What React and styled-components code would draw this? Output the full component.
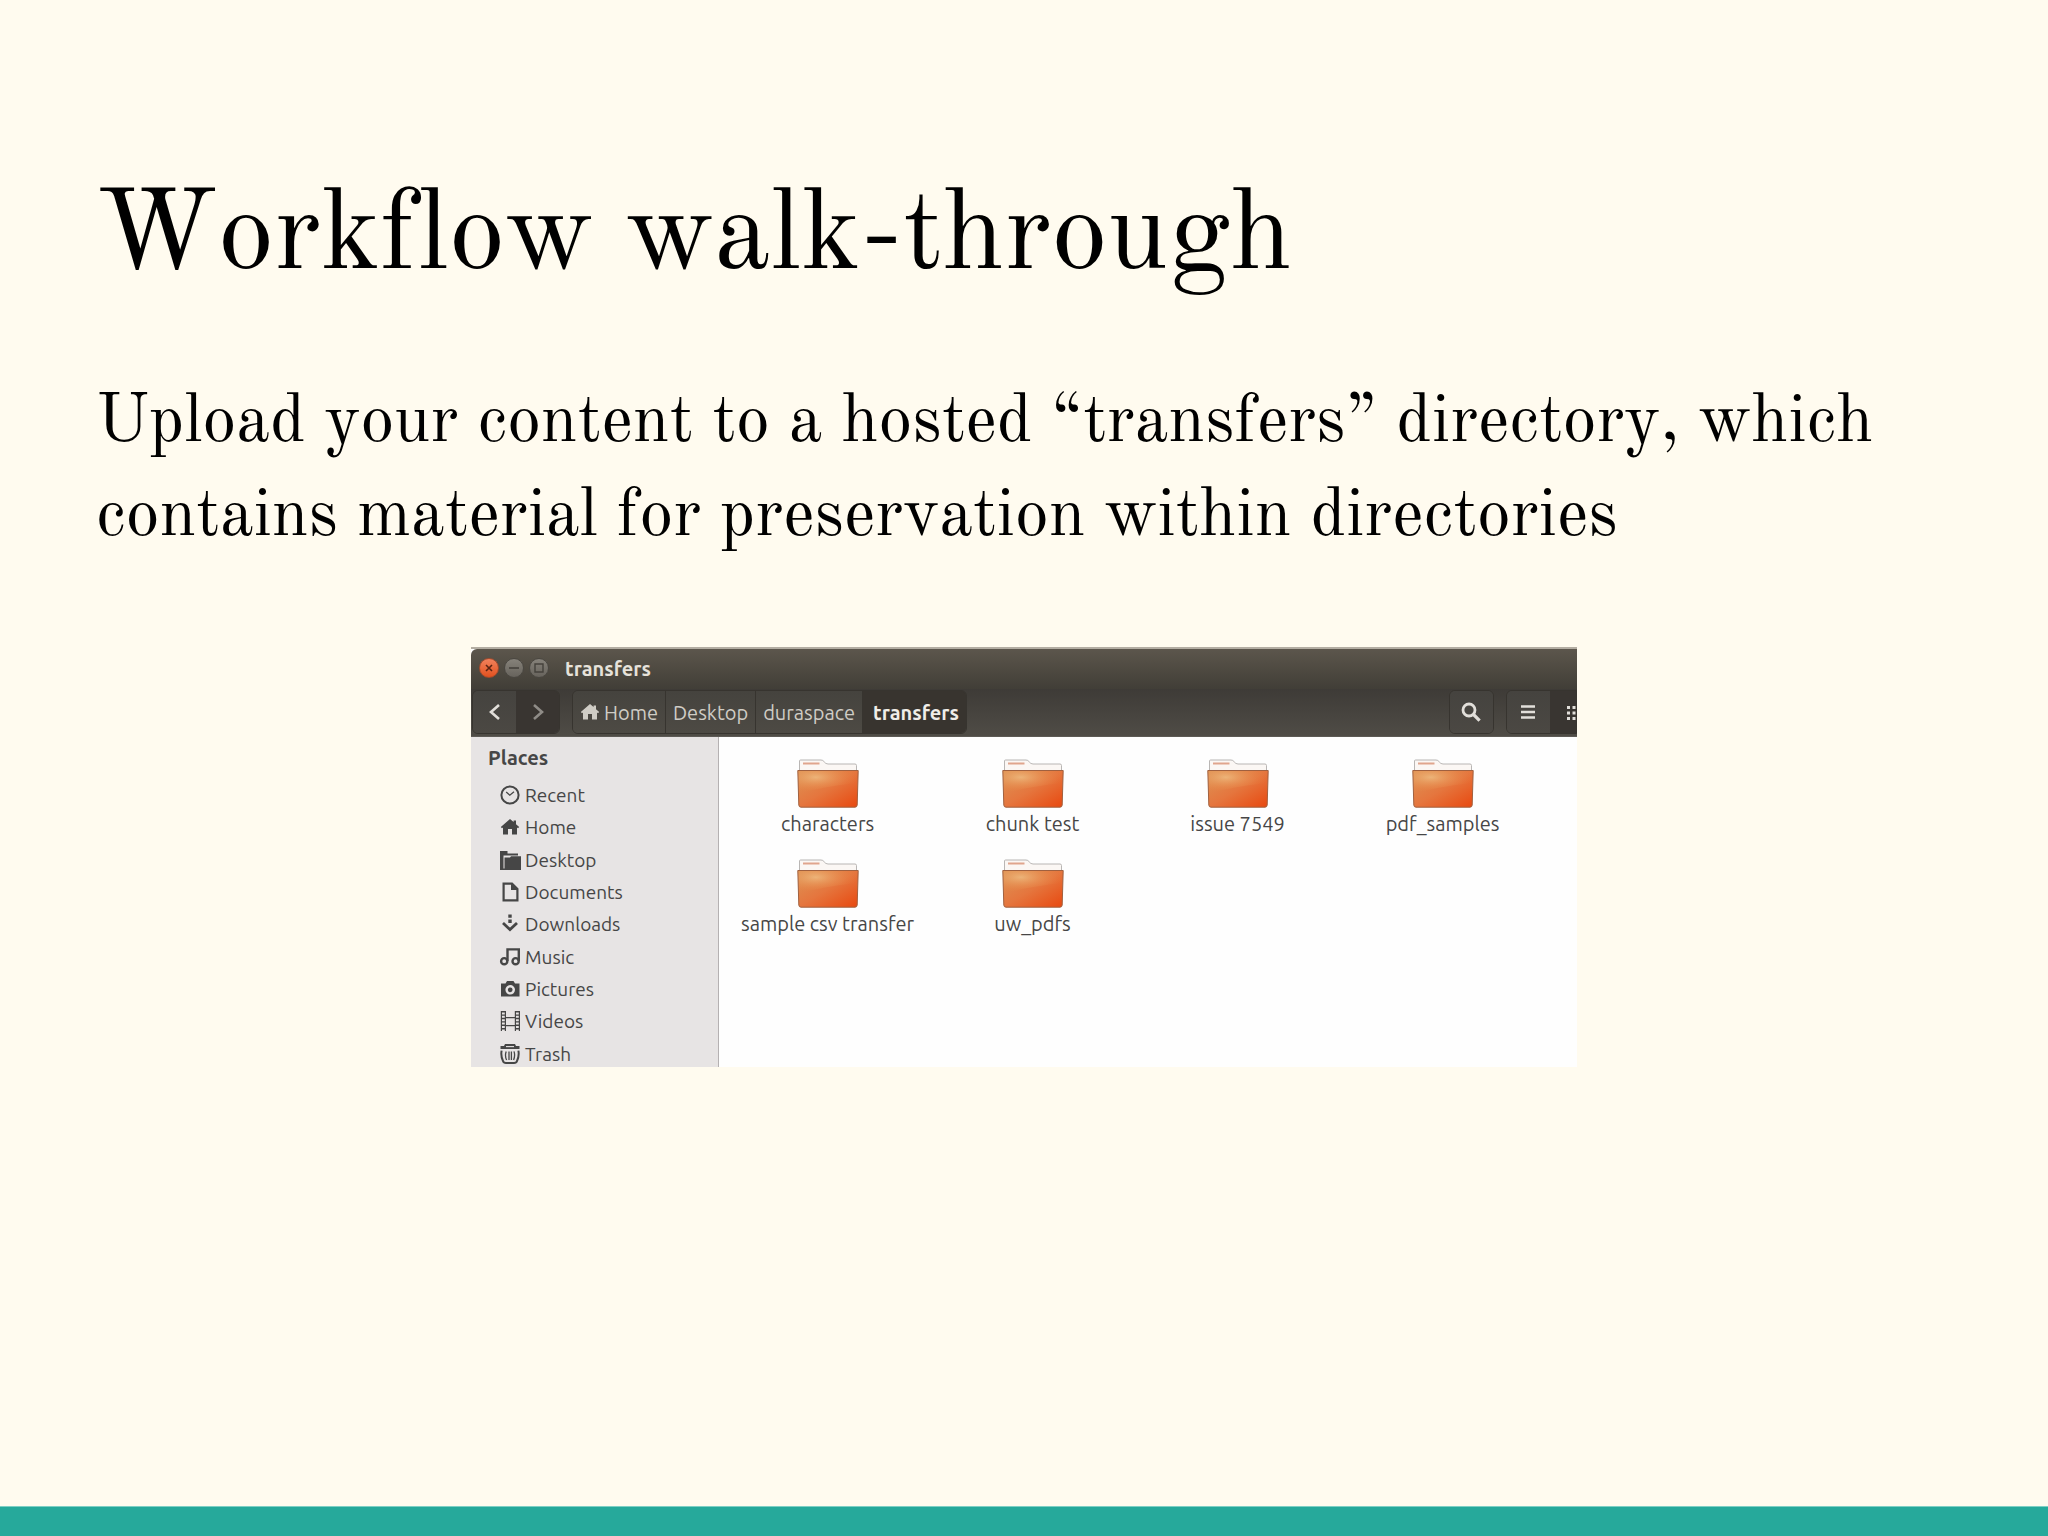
import { useState } from "react";
import styled, { createGlobalStyle } from "styled-components";

const GlobalStyle = createGlobalStyle`
* {
  box-sizing: border-box;
}
body {
  margin: 0;
  background: #fffbef;
}
`;

const Slide = styled.main`
  display: flex;
  flex-direction: column;
  min-height: 100vh;
  padding-top: 168px;
  color: #000;
  font-family: "Old Standard TT", "Liberation Serif", serif;
  font-kerning: none;
  font-variant-ligatures: none;
`;

const Title = styled.h1`
  margin: 0 96px 68px;
  font-size: 114px;
  font-weight: 400;
  line-height: 140px;
`;

const Lead = styled.p`
  margin: 0 96px 83px;
  font-size: 68px;
  line-height: 94px;
`;

const BottomBar = styled.footer`
  height: 30px;
  margin-top: auto;
  border-top: 1px solid #7fcfc4;
  background: #26a99b;
`;

const Window = styled.section`
  width: 54%;
  margin: 0 auto;
  overflow: hidden;
  border-top: 2px solid #b3ada2;
  background: #fefefe;
  color: #464646;
  font-family: Ubuntu, "Noto Sans", sans-serif;
  font-size: 20px;
  font-kerning: auto;
`;

const TitleBar = styled.header`
  display: flex;
  align-items: center;
  gap: 5px;
  height: 40px;
  padding: 0 0 2px 8px;
  border-top-left-radius: 6px;
  background: linear-gradient(#5c564c, #413e37);
`;

const WindowName = styled.h2`
  margin: 0 0 0 11px;
  color: #e6e2da;
  font-size: 20px;
  font-weight: 700;
`;

const RoundButton = styled.button`
  display: flex;
  width: 20px;
  height: 20px;
  padding: 0;
  border: 1px solid ${(props) => (props.$close ? "#a34a2c" : "#4a4741")};
  border-radius: 50%;
  background: ${(props) =>
    props.$close
      ? "linear-gradient(#f1825c, #e2511f)"
      : "linear-gradient(#86827a, #67635c)"};
  color: ${(props) => (props.$close ? "#5a2413" : "#45423c")};
`;

const Toolbar = styled.nav`
  display: flex;
  align-items: flex-start;
  gap: 12px;
  height: 48px;
  padding: 1px 0 3px 1px;
  border-bottom: 1px solid #5d5a55;
  background: linear-gradient(#3e3b37, #4f4c46);
`;

const Group = styled.div`
  display: flex;
  flex: none;
  height: 44px;
  overflow: hidden;
  border: 1px solid #37342f;
  border-radius: ${(props) => (props.$open ? "6px 0 0 6px" : "6px")};
`;

const ToolButton = styled.button`
  display: flex;
  align-items: center;
  justify-content: ${(props) => (props.$clipped ? "flex-start" : "center")};
  width: ${(props) => (props.$clipped ? 26 : 43)}px;
  padding: ${(props) => (props.$clipped ? "0 0 0 16px" : "0")};
  overflow: hidden;
  border: 0;
  background: ${(props) =>
    props.$pressed ? "#393531" : "linear-gradient(#45433f, #4b4843)"};
  color: ${(props) => (props.$dim ? "#8f8c87" : "#e2dfda")};

  svg {
    flex: none;
  }
`;

const PathButton = styled.button`
  display: flex;
  align-items: center;
  justify-content: center;
  gap: 4px;
  padding: 0 7px;
  border: 0;
  border-right: 1px solid #37342f;
  background: ${(props) =>
    props.$current ? "#38342f" : "linear-gradient(#45433e, #4d4a44)"};
  color: ${(props) => (props.$current ? "#f0ede7" : "#cfccc5")};
  font-family: inherit;
  font-size: 20px;
  font-weight: ${(props) => (props.$current ? 700 : 400)};

  &:last-child {
    padding: 0 7px 0 10px;
    border-right: 0;
  }
`;

const Spacer = styled.div`
  flex: 1;
`;

const Body = styled.div`
  display: flex;
  height: 330px;
`;

const Sidebar = styled.aside`
  flex: none;
  width: 248px;
  border-right: 1px solid #b5b1b2;
  background: #e7e4e4;
`;

const SidebarTitle = styled.h3`
  margin: 0;
  padding-left: 17px;
  font-size: 20px;
  font-weight: 700;
  line-height: 42px;
`;

const PlaceList = styled.ul`
  display: grid;
  grid-auto-rows: 1fr;
  height: 291px;
  margin: 0;
  padding: 0;
  font-size: 19px;
  list-style: none;
`;

const PlaceLink = styled.a`
  display: flex;
  align-items: center;
  gap: 5px;
  height: 100%;
  padding-left: 29px;
  color: inherit;
  text-decoration: none;
`;

const Files = styled.div`
  display: grid;
  flex: 1;
  grid-template-columns: repeat(auto-fill, 205px);
  align-content: start;
  row-gap: 21px;
  padding: 22px 0 0 6px;
`;

const FileButton = styled.button`
  display: flex;
  flex-direction: column;
  align-items: center;
  gap: 2px;
  padding: 0;
  border: 0;
  background: none;
  color: inherit;
  font-family: inherit;
  font-size: 20px;
  line-height: 28px;
`;

const HomeIcon = () => (
  <svg width="20" height="20" viewBox="0 0 20 20" fill="currentColor">
    <path d="M10 2 L0.8 10 L2 11.3 L3 10.6 V17.5 H8 V12 H12 V17.5 H17 V10.6 L18 11.3 L19.2 10 L16 7.2 V3.5 H13.6 V5.1 Z" />
  </svg>
);

const placeIcons = {
  recent: (
    <>
      <circle cx="10" cy="10" r="8.6" fill="none" stroke="currentColor" strokeWidth="2" />
      <path d="M6.2 7 L9.8 10.2 L14 6.8" fill="none" stroke="currentColor" strokeWidth="1.3" />
    </>
  ),
  desktop: (
    <path d="M0 1 H7.5 V3.5 H18 V5.5 H3.5 V18.5 H21 V20 H0 Z M4.5 7.5 L10 7.5 L11 6.3 H21 V19 H4.5 Z" fill="currentColor" />
  ),
  documents: (
    <>
      <path d="M3.6 1.6 H12 L17.4 7 V18.4 H3.6 Z" fill="none" stroke="currentColor" strokeWidth="2.2" />
      <path d="M11 1 V8 H18 Z" fill="currentColor" />
    </>
  ),
  downloads: (
    <>
      <path d="M8.3 0.5 H11.7 V3.8 H8.3 Z M8.3 5.6 H11.7 V8.9 H8.3 Z" fill="currentColor" />
      <path d="M3 9 L10 15.6 L17 9" fill="none" stroke="currentColor" strokeWidth="2.8" />
    </>
  ),
  music: (
    <>
      <circle cx="4.2" cy="14.2" r="3.1" fill="none" stroke="currentColor" strokeWidth="2.4" />
      <circle cx="15.6" cy="14.2" r="3.1" fill="none" stroke="currentColor" strokeWidth="2.4" />
      <path d="M7.5 14 V2.4 H18.8 V14" fill="none" stroke="currentColor" strokeWidth="2.4" />
    </>
  ),
  pictures: (
    <path
      fillRule="evenodd"
      d="M1 4.5 H5.5 L7 2 H13.5 L15 4.5 H19.5 V17.5 H1 Z M10.2 6 A4.8 4.8 0 1 0 10.2 15.6 A4.8 4.8 0 1 0 10.2 6 Z M10.2 8.4 A2.4 2.4 0 1 1 10.2 13.2 A2.4 2.4 0 1 1 10.2 8.4 Z"
      fill="currentColor"
    />
  ),
  videos: (
    <>
      <path d="M1.4 0 V20 M5.4 0 V20 M15.4 0 V20 M19.4 0 V20 M5 6.6 H16 M5 14.6 H16" fill="none" stroke="currentColor" strokeWidth="1.2" />
      <path d="M3.4 0 V20 M17.4 0 V20" fill="none" stroke="currentColor" strokeWidth="4" strokeDasharray="1.4 2" />
    </>
  ),
  trash: (
    <>
      <path d="M5 0 H15 L16 2 H19.5 V5 H0.5 V2 H4 Z" fill="currentColor" />
      <path d="M6 2.6 H14" stroke="#e7e4e4" strokeWidth="1.1" />
      <path d="M1.6 6.6 Q0.6 12 3 17 Q3.6 19 6 19 H14 Q16.4 19 17 17 Q19.4 12 18.4 6.6" fill="none" stroke="currentColor" strokeWidth="2" />
      <path d="M6.2 7.4 Q4.6 11.6 6.6 16 M9 7.4 V16 M11.4 7.4 V16 M14 7.4 Q15.4 11.6 13.6 16" fill="none" stroke="currentColor" strokeWidth="1.3" />
    </>
  ),
};

const PlaceIcon = ({ name }) => {
  if (name === "home") {
    return <HomeIcon />;
  }
  return (
    <svg width="20" height="20" viewBox="0 0 20 20" overflow="visible">
      {placeIcons[name]}
    </svg>
  );
};

const FolderIcon = () => (
  <svg width="62" height="49" viewBox="0 0 62 49">
    <defs>
      <linearGradient id="front" x1="0" y1="0" x2="1" y2="1">
        <stop offset="0" stopColor="#dd9456" />
        <stop offset="0.5" stopColor="#e5763e" />
        <stop offset="1" stopColor="#e8480f" />
      </linearGradient>
      <radialGradient id="shine" cx="0.3" cy="0.3" r="0.7">
        <stop offset="0" stopColor="#efbf84" stopOpacity="0.8" />
        <stop offset="1" stopColor="#e9833f" stopOpacity="0" />
      </radialGradient>
    </defs>
    <path d="M2.5 14 V2 Q2.5 1 3.5 1 H24 Q26 1 27.2 2.8 Q28.6 5 31 5 H58 Q59.5 5 59.5 6.5 V14 Z" fill="#fbf7f4" stroke="#b9b6b4" />
    <path d="M6 4.5 H22.5" stroke="#e0a58d" strokeWidth="2" />
    <path d="M0.8 11.5 H61.2 L60.2 46 Q60 48.2 58 48.2 H4 Q2 48.2 1.8 46 Z" fill="url(#front)" />
    <path d="M0.8 11.5 H61.2 L60.4 24 Q38 26 1.6 34 Z" fill="url(#shine)" />
    <path d="M0.8 11.5 H61.2 L60.2 46 Q60 48.2 58 48.2 H4 Q2 48.2 1.8 46 Z" fill="none" stroke="#a0603f" />
  </svg>
);

const places = ["Recent", "Home", "Desktop", "Documents", "Downloads", "Music", "Pictures", "Videos", "Trash"];
const path = ["Home", "Desktop", "duraspace", "transfers"];
const folders = ["characters", "chunk test", "issue 7549", "pdf_samples", "sample csv transfer", "uw_pdfs"];

function FileManager() {
  const [current, setCurrent] = useState("transfers");

  return (
    <Window>
      <TitleBar>
        <RoundButton $close aria-label="Close">
          <svg width="18" height="18" viewBox="0 0 18 18">
            <path d="M6 6 L12 12 M12 6 L6 12" stroke="currentColor" strokeWidth="1.6" />
          </svg>
        </RoundButton>
        <RoundButton aria-label="Minimize">
          <svg width="18" height="18" viewBox="0 0 18 18">
            <path d="M4 9 H14" stroke="currentColor" strokeWidth="1.6" />
          </svg>
        </RoundButton>
        <RoundButton aria-label="Maximize">
          <svg width="18" height="18" viewBox="0 0 18 18">
            <path d="M5 5 H13 V13 H5 Z" fill="none" stroke="currentColor" strokeWidth="1.4" />
          </svg>
        </RoundButton>
        <WindowName>transfers</WindowName>
      </TitleBar>

      <Toolbar>
        <Group>
          <ToolButton aria-label="Back">
            <svg width="20" height="20" viewBox="0 0 20 20">
              <path d="M14 3 L6 10 L14 17" fill="none" stroke="currentColor" strokeWidth="2.6" />
            </svg>
          </ToolButton>
          <ToolButton $pressed $dim aria-label="Forward">
            <svg width="20" height="20" viewBox="0 0 20 20">
              <path d="M6 3 L14 10 L6 17" fill="none" stroke="currentColor" strokeWidth="2.6" />
            </svg>
          </ToolButton>
        </Group>
        <Group>
          {path.map((name) => (
            <PathButton key={name} $current={name === current} onClick={() => setCurrent(name)}>
              {name === "Home" && <HomeIcon />}
              {name}
            </PathButton>
          ))}
        </Group>
        <Spacer />
        <Group>
          <ToolButton aria-label="Search">
            <svg width="20" height="20" viewBox="0 0 20 20" fill="none" stroke="currentColor">
              <circle cx="8" cy="8" r="6" strokeWidth="2.8" />
              <path d="M12 12 L18.6 18.6" strokeWidth="3.2" />
            </svg>
          </ToolButton>
        </Group>
        <Group $open>
          <ToolButton aria-label="List view">
            <svg width="14" height="14" viewBox="0 0 14 14">
              <path d="M0 1.5 H14 M0 7 H14 M0 12.5 H14" stroke="currentColor" strokeWidth="2.6" />
            </svg>
          </ToolButton>
          <ToolButton $pressed $clipped aria-label="Icon view">
            <svg width="15" height="15" viewBox="0 0 15 15" fill="currentColor">
              <path d="M1 1h3v3h-3z M6.5 1h3v3h-3z M12 1h3v3h-3z M1 6.5h3v3h-3z M6.5 6.5h3v3h-3z M12 6.5h3v3h-3z M1 12h3v3h-3z M6.5 12h3v3h-3z M12 12h3v3h-3z" />
            </svg>
          </ToolButton>
        </Group>
      </Toolbar>

      <Body>
        <Sidebar>
          <SidebarTitle>Places</SidebarTitle>
          <PlaceList>
            {places.map((name) => (
              <li key={name}>
                <PlaceLink href={"#" + name.toLowerCase()}>
                  <PlaceIcon name={name.toLowerCase()} />
                  {name}
                </PlaceLink>
              </li>
            ))}
          </PlaceList>
        </Sidebar>
        <Files>
          {folders.map((name) => (
            <FileButton key={name}>
              <FolderIcon />
              {name}
            </FileButton>
          ))}
        </Files>
      </Body>
    </Window>
  );
}

export default function App() {
  return (
    <>
      <GlobalStyle />
      <Slide>
        <Title>Workflow walk-through</Title>
        <Lead>
          Upload your content to a hosted “transfers” directory, which contains
          material for preservation within directories
        </Lead>
        <FileManager />
        <BottomBar />
      </Slide>
    </>
  );
}
